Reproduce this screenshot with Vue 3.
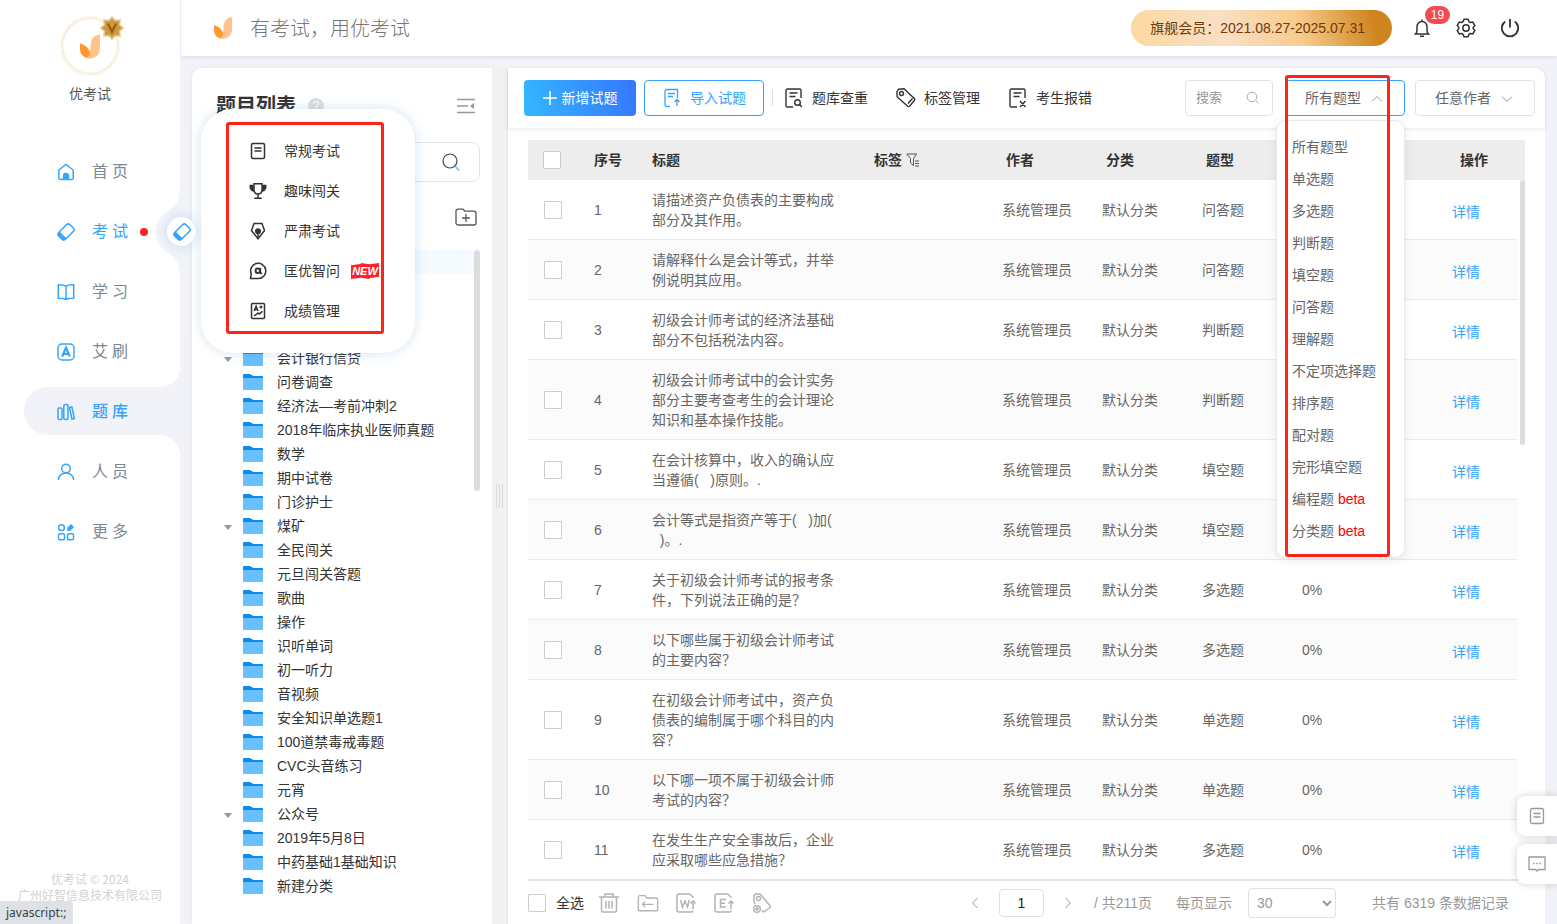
<script setup>
import { ref } from 'vue'

const icons = {
  home: '<path d="M1.800 7 9 1.500 16.200 7v8a1.600 1.600 0 0 1-1.600 1.600H3.400A1.600 1.600 0 0 1 1.800 15z"/><path d="M5.800 16.600V13a3.200 3.200 0 0 1 6.400 0v3.600z" fill="currentColor" stroke="none"/>',
  eraser: '<g transform="rotate(-45 9 9)"><rect x="1" y="4.200" width="16" height="9.600" rx="2.500"/><path d="M4.800 4.200v9.600H3.500A2.500 2.500 0 0 1 1 11.300V6.700a2.500 2.500 0 0 1 2.500-2.500z" fill="currentColor" stroke="none"/></g>',
  book: '<path d="M9 3.200C7.500 2 5 1.700 1.300 1.800v13.400c3.700 0 6.200.1 7.700 1.300 1.500-1.200 4-1.300 7.700-1.300V1.800C13 1.700 10.500 2 9 3.200zM9 3.200v13.300"/>',
  letterA: '<rect x="1" y="1" width="16" height="16" rx="4"/><path d="M5.200 13.500 9 4.600l3.800 8.900M6.600 10.800h4.800" stroke-width="2.200"/>',
  library: '<rect x="1" y="5" width="4" height="11.500" rx="1"/><rect x="6.800" y="1.500" width="4.200" height="15" rx="1.500"/><path d="m12.500 4.500 2.400-.6 2.400 11.500-2.300.8z"/>',
  user: '<circle cx="9" cy="5.500" r="4.300"/><path d="M1.300 17c.6-4.200 3.300-7 7.700-7s7.100 2.800 7.700 7"/>',
  more: '<circle cx="4.500" cy="4.700" r="2.900"/><rect x="1.500" y="10.700" width="6" height="6" rx="1.200"/><rect x="10.500" y="10.700" width="6" height="6" rx="1.200"/><path d="m11.500 6.600 4-4.200" stroke-width="4.400"/><path d="M10 8.200 10.300 5l2.600 2.700z" fill="currentColor" stroke="none"/>',
  doc: '<rect x="2.500" y="1.500" width="13" height="15" rx="1.500"/><path d="M5.500 6h7M5.500 9h7"/>',
  cup: '<path d="M5 1.700h8v6c0 2.700-1.600 4.300-4 4.300S5 10.400 5 7.700zM9 12v4M5.300 16.300h7.400"/><path d="M4.500 3.500H1.300c-.3 3.200 1 5.300 3.800 5.500M13.500 3.500h3.200c.3 3.200-1 5.300-3.800 5.500" fill="currentColor"/>',
  pen: '<path d="M5 1.500h8l2.500 7L9 16.700 2.500 8.500z"/><circle cx="9" cy="9.200" r="3" fill="currentColor" stroke="none"/><path d="M9 9v7"/>',
  ask: '<path d="M1.500 16.500h7.700A7.600 7.600 0 1 0 2.300 12z"/><circle cx="8.800" cy="8.800" r="2.200" stroke-width="2"/><path d="M11.300 6v4.500c0 1 1 1 1.700.3" stroke-width="1.700"/>',
  score: '<rect x="2.500" y="1.500" width="13" height="15" rx="1"/><path d="m5.200 9 1.900-4.700L9 9M5.800 7.500h2.700M10.500 5h3M12 3.500v3M5 14l4-2.800 1.700.6 2.800-2.600"/>',
}

const nav = [
  { label: '首页', icon: 'home' },
  { label: '考试', icon: 'eraser', open: true },
  { label: '学习', icon: 'book' },
  { label: '艾刷', icon: 'letterA' },
  { label: '题库', icon: 'library', active: true },
  { label: '人员', icon: 'user' },
  { label: '更多', icon: 'more' },
]

const examMenu = [
  { label: '常规考试', icon: 'doc' },
  { label: '趣味闯关', icon: 'cup' },
  { label: '严肃考试', icon: 'pen' },
  { label: '匡优智问', icon: 'ask', fresh: true },
  { label: '成绩管理', icon: 'score' },
]

const tree = [
  { name: '会计银行信贷', parent: true },
  { name: '问卷调查' },
  { name: '经济法—考前冲刺2' },
  { name: '2018年临床执业医师真题' },
  { name: '数学' },
  { name: '期中试卷' },
  { name: '门诊护士' },
  { name: '煤矿', parent: true },
  { name: '全民闯关' },
  { name: '元旦闯关答题' },
  { name: '歌曲' },
  { name: '操作' },
  { name: '识听单词' },
  { name: '初一听力' },
  { name: '音视频' },
  { name: '安全知识单选题1' },
  { name: '100道禁毒戒毒题' },
  { name: 'CVC头音练习' },
  { name: '元宵' },
  { name: '公众号', parent: true },
  { name: '2019年5月8日' },
  { name: '中药基础1基础知识' },
  { name: '新建分类' },
]

const rows = [
  { title: '请描述资产负债表的主要构成部分及其作用。', type: '问答题' },
  { title: '请解释什么是会计等式，并举例说明其应用。', type: '问答题' },
  { title: '初级会计师考试的经济法基础部分不包括税法内容。', type: '判断题' },
  { title: '初级会计师考试中的会计实务部分主要考查考生的会计理论知识和基本操作技能。', type: '判断题' },
  { title: '在会计核算中，收入的确认应当遵循(\u00a0\u00a0\u00a0)原则。.', type: '填空题' },
  { title: '会计等式是指资产等于(\u00a0\u00a0\u00a0)加(\n\u00a0\u00a0)。.', type: '填空题' },
  { title: '关于初级会计师考试的报考条件，下列说法正确的是？', type: '多选题', rate: '0%' },
  { title: '以下哪些属于初级会计师考试的主要内容？', type: '多选题', rate: '0%' },
  { title: '在初级会计师考试中，资产负债表的编制属于哪个科目的内容？', type: '单选题', rate: '0%' },
  { title: '以下哪一项不属于初级会计师考试的内容？', type: '单选题', rate: '0%' },
  { title: '在发生生产安全事故后，企业应采取哪些应急措施？', type: '多选题', rate: '0%' },
]

const types = ['所有题型', '单选题', '多选题', '判断题', '填空题', '问答题', '理解题', '不定项选择题', '排序题', '配对题', '完形填空题']
const betaTypes = ['编程题', '分类题']
const page = ref('1')
</script>

<template>
  <div class="app">
    <aside class="sidebar">
      <div class="brand">
        <div class="avatar">
          <svg class="logo" viewBox="0 0 18 22"><path d="M18 0C12 1 9.500 4.500 9.500 11c0 4-2 8-6 9.500C5 21.600 7 22 9 22a9 9 0 0 0 9-9z" fill="#ffc48e" /><path d="M0 8.300c5 1 9 5 9 9.200-.2 2.500-2.500 3.500-4.500 3C1.500 19.500 0 16.500 0 13.500z" fill="#ff9830" /></svg>
          <svg class="vip" viewBox="0 0 24 24"><path d="m12 1 3 3.500 5-.5-.5 5 3.500 3-3.500 3 .5 5-5-.5-3 3.500-3-3.500-5 .5.500-5L1 12l3.500-3L4 4l5 .5z" fill="#cd9844" stroke="#e6c583" stroke-width="1.500" /><path d="m8 7.500 4 8.500 4-8.500" fill="none" stroke="#9a5c10" stroke-width="2.200" /></svg>
        </div>
        <span>优考试</span>
      </div>
      <nav>
        <ul class="nav-list">
          <li v-for="n in nav" :key="n.label" class="nav-item" :class="{ active: n.active, open: n.open }">
            <a href="#">
              <svg class="icon" viewBox="0 0 18 18" v-html="icons[n.icon]"></svg>
              <span>{{ n.label }}</span>
              <i v-if="n.open" class="dot"></i>
            </a>
            <template v-if="n.open">
              <svg class="notch" viewBox="0 0 24 90"><path d="M24 0c0 12-4 19-12 24C4 29 0 37 0 45s4 16 12 21c8 5 12 12 12 24z" fill="#f1f3f8" /></svg>
              <div class="bubble"><svg class="icon" viewBox="0 0 18 18" v-html="icons.eraser"></svg></div>
              <div class="flyout">
                <ul class="flyout-list">
                  <li v-for="m in examMenu" :key="m.label">
                    <a href="#">
                      <svg class="icon" viewBox="0 0 18 18" v-html="icons[m.icon]"></svg>
                      <span>{{ m.label }}</span>
                      <b v-if="m.fresh" class="new-tag">NEW</b>
                    </a>
                  </li>
                </ul>
              </div>
            </template>
          </li>
        </ul>
      </nav>
      <footer class="copyright">优考试 © 2024<br />广州好智信息技术有限公司</footer>
    </aside>

    <div class="main">
      <header class="topbar">
        <svg class="logo" viewBox="0 0 18 22"><path d="M18 0C12 1 9.500 4.500 9.500 11c0 4-2 8-6 9.500C5 21.600 7 22 9 22a9 9 0 0 0 9-9z" fill="#ffc48e" /><path d="M0 8.300c5 1 9 5 9 9.200-.2 2.500-2.500 3.500-4.500 3C1.500 19.500 0 16.500 0 13.500z" fill="#ff9830" /></svg>
        <span class="slogan">有考试，用优考试</span>
        <span class="member">旗舰会员：2021.08.27-2025.07.31</span>
        <button class="icon-btn" aria-label="通知">
          <svg class="icon" viewBox="0 0 20 20"><path d="M3.500 16c1-1 1.500-2.200 1.500-4V8.500a5 5 0 0 1 10 0V12c0 1.800.5 3 1.500 4zM8 18.300h4M10 3.500V1.500" /></svg>
          <span class="count">19</span>
        </button>
        <button class="icon-btn" aria-label="设置">
          <svg class="icon" viewBox="0 0 20 20"><path d="M8 1.300h4l.8 2.300 1.600.9 2.400-.4 2 3.400L17.200 9.400v1.200l1.600 1.900-2 3.400-2.400-.4-1.600.9-.8 2.300H8l-.8-2.300-1.600-.9-2.400.4-2-3.400 1.600-1.900V9.400L1.200 7.500l2-3.400 2.400.4 1.600-.9z" stroke-linejoin="round" /><circle cx="10" cy="10" r="3.200" /></svg>
        </button>
        <button class="icon-btn" aria-label="退出">
          <svg class="icon" viewBox="0 0 20 20"><path d="M5.200 3.500a8.200 8.200 0 1 0 9.600 0M10 1v8.500" stroke-width="1.800" /></svg>
        </button>
      </header>

      <div class="workspace">
        <section class="tree-panel">
          <div class="tree-head">
            <h2>题目列表</h2>
            <span class="help">?</span>
            <button aria-label="收起"><svg viewBox="0 0 20 16"><path d="M1 1.500h18M1 8h11M1 14.500h18" stroke="#999" stroke-width="1.600" fill="none" /><path d="M18 5v6l-4-3z" fill="#999" /></svg></button>
          </div>
          <div class="tree-search">
            <input type="text" aria-label="搜索分类" />
            <svg viewBox="0 0 18 18"><circle cx="8" cy="8" r="7" fill="none" stroke="#444" stroke-width="1.200" /><path d="m13.500 13.500 3.500 4" stroke="#6cc0ff" stroke-width="1.800" /></svg>
          </div>
          <div class="tree-tools">
            <button aria-label="新建文件夹"><svg viewBox="0 0 22 18"><path d="M3 1.200h5l2 2h9a2 2 0 0 1 2 2V15a2 2 0 0 1-2 2H3a2 2 0 0 1-2-2V3.200a2 2 0 0 1 2-2zM7 10h8M11 6v8" fill="none" stroke="#555" stroke-width="1.300" /></svg></button>
          </div>
          <div class="tree-scroll">
            <div class="tree-selected"></div>
            <ul class="tree">
              <li v-for="t in tree" :key="t.name">
                <i class="caret" :class="{ shown: t.parent }"></i>
                <svg class="folder" viewBox="0 0 20 16"><path d="M0 1.200Q0 0 1.200 0H7l3.500 2H19q1 0 1 1v3H0z" fill="#0a8bf0" /><path d="M0 4h20v11q0 1-1 1H1q-1 0-1-1z" fill="#6ac0ff" /></svg>
                <span>{{ t.name }}</span>
              </li>
            </ul>
            <i class="tree-thumb"></i>
          </div>
        </section>

        <div class="splitter"><i></i></div>

        <section class="content">
          <div class="toolbar">
            <button class="btn primary"><svg viewBox="0 0 14 14"><path d="M7 0v14M0 7h14" stroke="#fff" stroke-width="1.500" /></svg>新增试题</button>
            <button class="btn outline"><svg viewBox="0 0 20 20"><path d="M8 18.500H4.500A1.500 1.500 0 0 1 3 17V3a1.500 1.500 0 0 1 1.500-1.500h11V10M3 14.500v2M6 5.500h7M6 8.500h5M15 18v-6.500M12.500 14l2.500-2.500 2.500 2.500" fill="none" stroke="currentColor" stroke-width="1.300" /></svg>导入试题</button>
            <i class="sep"></i>
            <button class="tool"><svg viewBox="0 0 20 20"><path d="M9 19H3.500A1.500 1.500 0 0 1 2 17.500v-15A1.500 1.500 0 0 1 3.500 1h12A1.500 1.500 0 0 1 17 2.500V10M5.500 5h8M5.500 8.500h6" /><circle cx="13.500" cy="14.500" r="2.800" /><path d="m15.500 16.500 2.300 2.500" /></svg>题库查重</button>
            <button class="tool"><svg viewBox="0 0 20 20"><path d="M.8 4 2.500 1.200 8 .8l10.500 9.900a1.500 1.500 0 0 1 0 1.600l-5 6a1.500 1.500 0 0 1-1.800 0L1.200 9zM12 15.500l4.500-5" /><circle cx="5.500" cy="5.500" r="2" /></svg>标签管理</button>
            <button class="tool"><svg viewBox="0 0 20 20"><path d="M9 19H3.500A1.500 1.500 0 0 1 2 17.500v-15A1.500 1.500 0 0 1 3.500 1h12A1.500 1.500 0 0 1 17 2.500V10M5.500 5h8M5.500 8.500h6M12 13l5.500 6M17.500 13 12 19" /></svg>考生报错</button>
            <div class="search">
              <input type="text" placeholder="搜索" aria-label="搜索试题" />
              <svg viewBox="0 0 14 14"><circle cx="6" cy="6" r="4.800" /><path d="m10 10 2.500 2.500" /></svg>
            </div>
            <div class="picker focus">
              <select aria-label="题型"><option>所有题型</option></select>
              <svg viewBox="0 0 12 8"><path d="m1 6.500 5-5 5 5" /></svg>
              <ul class="menu">
                <li v-for="t in types" :key="t"><button>{{ t }}</button></li>
                <li v-for="t in betaTypes" :key="t"><button>{{ t }} <em>beta</em></button></li>
              </ul>
              <i class="marker"></i>
            </div>
            <div class="picker">
              <select aria-label="作者"><option>任意作者</option></select>
              <svg viewBox="0 0 12 8"><path d="m1 1.500 5 5 5-5" /></svg>
            </div>
          </div>

          <div class="table-area">
            <table>
              <colgroup>
                <col class="c-check" /><col class="c-no" /><col class="c-title" /><col class="c-tag" /><col class="c-text" /><col class="c-text" /><col class="c-text" /><col /><col class="c-op" /><col class="c-gutter" />
              </colgroup>
              <thead>
                <tr>
                  <th class="check"><input type="checkbox" aria-label="全选本页" /></th>
                  <th>序号</th>
                  <th>标题</th>
                  <th>标签 <svg class="filter" viewBox="0 0 13 14"><path d="M.7 1h10L7.500 5.500v7L4.500 10V5.500zM9 8h4M9 10.500h4M9 13h4" /></svg></th>
                  <th class="shift">作者</th>
                  <th class="shift">分类</th>
                  <th class="shift">题型</th>
                  <th></th>
                  <th class="op">操作</th>
                  <th class="gutter"></th>
                </tr>
              </thead>
              <tbody>
                <tr v-for="(r, i) in rows" :key="i">
                  <td class="check"><input type="checkbox" :aria-label="'选择 ' + (i + 1)" /></td>
                  <td>{{ i + 1 }}</td>
                  <td class="title">{{ r.title }}</td>
                  <td></td>
                  <td>系统管理员</td>
                  <td>默认分类</td>
                  <td>{{ r.type }}</td>
                  <td>{{ r.rate }}</td>
                  <td class="op"><a href="#">详情</a></td>
                  <td class="gutter"></td>
                </tr>
              </tbody>
            </table>
            <i class="table-thumb"></i>
          </div>

          <div class="pager">
            <label class="all"><input type="checkbox" />全选</label>
            <div class="actions">
              <button aria-label="删除"><svg viewBox="0 0 20 20"><path d="M0 4h20M6 4V1h8v3M2.500 4v13.500A1.500 1.500 0 0 0 4 19h12a1.500 1.500 0 0 0 1.500-1.500V4M7 8v7.500M10 8v7.500M13 8v7.500" /></svg></button>
              <button aria-label="移动"><svg class="wide" viewBox="0 0 24 20"><path d="M3 2h6l2 2.500h10A1.500 1.500 0 0 1 22.500 6v11a1.500 1.500 0 0 1-1.500 1.500H3A1.500 1.500 0 0 1 1.500 17V3.500A1.500 1.500 0 0 1 3 2zM6 11.500h12M9 8.500l-3 3 3 3" /></svg></button>
              <button aria-label="导出 Word"><svg viewBox="0 0 20 20"><path d="M16 5V4l-3.500-3H2a2 2 0 0 0-2 2v14a2 2 0 0 0 2 2h12.500a1.500 1.500 0 0 0 1.500-1.500M3.500 7l2 7L8 8l2.500 6 1.800-7M16 16V8M13.500 10.500 16 8l2.500 2.500" /></svg></button>
              <button aria-label="导出 Excel"><svg viewBox="0 0 20 20"><path d="M16 5V4l-3.500-3H2a2 2 0 0 0-2 2v14a2 2 0 0 0 2 2h12.500a1.500 1.500 0 0 0 1.500-1.500M11 6.500H5.500v7.500H11M5.500 10.200H10M16 16V8M13.500 10.500 16 8l2.500 2.500" /></svg></button>
              <button aria-label="添加标签"><svg viewBox="0 0 20 20"><path d="M2 11.500.8 8 1 2.500 3.300.8l4.200.5L17.200 13a1 1 0 0 1-.2 1.500L10.500 19l-1.500-1.500" /><circle cx="5.500" cy="5.500" r="2" /><circle cx="4" cy="16" r="3.300" /><path d="M2 16h4M4 14v4" /></svg></button>
            </div>
            <button class="arrow" aria-label="上一页"><svg viewBox="0 0 8 12"><path d="M6.500 1 1.500 6l5 5" /></svg></button>
            <input v-model="page" class="page" type="text" aria-label="页码" />
            <button class="arrow" aria-label="下一页"><svg viewBox="0 0 8 12"><path d="m1.500 1 5 5-5 5" /></svg></button>
            <span class="pages">/ 共211页</span>
            <label class="size">每页显示<select><option>30</option></select></label>
            <span class="total">共有 6319 条数据记录</span>
          </div>
        </section>
      </div>
    </div>

    <div class="floating">
      <button aria-label="文档"><svg viewBox="0 0 18 18"><rect x="2.500" y="1.500" width="13" height="15" rx="2" /><path d="M5.500 6.500h7M5.500 10h7" /></svg></button>
      <button aria-label="消息"><svg viewBox="0 0 18 18"><path d="M1 2h16v12.500h-6.500L9 16l-1.500-1.500H1zM5 8.500h1.500M8.300 8.500h1.500M11.500 8.500H13" /></svg></button>
    </div>
    <div class="status">javascript:;</div>
  </div>
</template>

<style>
html,
body {
  margin: 0;
  overflow: hidden;
}
</style>

<style scoped>
* {
  box-sizing: border-box;
}
.app {
  display: flex;
  height: 100vh;
  overflow: hidden;
  position: relative;
  background: #f1f3f8;
  color: #333;
  font: 14px/20px "Liberation Sans", "Noto Sans CJK SC", sans-serif;
}
ul {
  list-style: none;
  margin: 0;
  padding: 0;
}
a {
  color: inherit;
  text-decoration: none;
}
button {
  border: 0;
  padding: 0;
  background: none;
  color: inherit;
  font: inherit;
  cursor: pointer;
}
input,
select {
  font: inherit;
  margin: 0;
  outline: 0;
}
svg {
  display: block;
  flex: none;
}
.icon {
  width: 18px;
  height: 18px;
  fill: none;
  stroke: currentColor;
  stroke-width: 1.5;
}
.logo {
  width: 18px;
  height: 22px;
}
input[type="checkbox"] {
  appearance: none;
  display: block;
  width: 18px;
  height: 18px;
  border: 1px solid #ccc;
  border-radius: 1px;
  background: #fff;
}

/* sidebar */
.sidebar {
  flex: none;
  width: 180px;
  background: #fff;
  display: flex;
  flex-direction: column;
  position: relative;
  z-index: 2;
}
.brand {
  height: 147px;
  padding-top: 16px;
  display: flex;
  flex-direction: column;
  align-items: center;
  gap: 8px;
  color: #555;
}
.avatar {
  width: 60px;
  height: 60px;
  border: 2px solid #fbf4e8;
  border-radius: 50%;
  box-shadow: inset 0 0 0 1px #f3e3c6;
  display: grid;
  place-items: center;
  position: relative;
}
.avatar .logo {
  width: 20px;
  height: 25px;
}
.vip {
  position: absolute;
  right: -6px;
  top: -2px;
  width: 24px;
  height: 24px;
}
.nav-list {
  display: flex;
  flex-direction: column;
  gap: 12px;
}
.nav-item {
  position: relative;
  margin-left: 24px;
  color: #7c8894;
  font-size: 16px;
}
.nav-item > a {
  display: flex;
  align-items: center;
  height: 48px;
  padding-top: 2px;
  padding-left: 33px;
}
.nav-item > a span {
  margin-left: 17px;
  letter-spacing: 4px;
}
.nav-item > a .icon {
  color: #36a6fc;
}
.nav-item.open,
.nav-item.active {
  color: #36a2fc;
}
.nav-item.active {
  background: #f1f3f8;
  border-radius: 24px 0 0 24px;
  font-weight: 500;
}
.nav-item.active::before,
.nav-item.active::after {
  content: "";
  position: absolute;
  right: 0;
  width: 20px;
  height: 20px;
}
.nav-item.active::before {
  top: -20px;
  background: radial-gradient(circle at 0 0, transparent 20px, #f1f3f8 20px);
}
.nav-item.active::after {
  bottom: -20px;
  background: radial-gradient(circle at 0 100%, transparent 20px, #f1f3f8 20px);
}
.dot {
  width: 8px;
  height: 8px;
  margin-left: 8px;
  border-radius: 50%;
  background: #ff1f24;
}
.notch {
  position: absolute;
  right: 0;
  top: -20px;
  width: 24px;
  height: 90px;
}
.bubble {
  position: absolute;
  right: -16px;
  top: 10px;
  width: 29px;
  height: 29px;
  border-radius: 50%;
  background: #fff;
  box-shadow: 0 0 12px rgba(54, 140, 210, 0.25);
  display: grid;
  place-items: center;
}
.flyout {
  position: absolute;
  left: 177px;
  top: -98px;
  width: 214px;
  padding: 13px 25px 19px;
  border-radius: 32px;
  background: #fff;
  box-shadow: 0 0 12px rgba(70, 140, 200, 0.25);
  color: #333;
  font-size: 14px;
}
.flyout-list {
  width: 158px;
  padding: 6px 0 0;
  height: 212px;
  border: 3px solid #ff2418;
  border-radius: 3px;
}
.flyout-list a {
  display: flex;
  align-items: center;
  height: 40px;
  padding-left: 20px;
}
.flyout-list span {
  margin: 0 11px 0 17px;
  white-space: nowrap;
}
.new-tag {
  flex: none;
  width: 28px;
  background: #ff1f2d;
  color: #fff;
  font-size: 11px;
  font-style: italic;
  line-height: 16px;
  text-align: center;
  clip-path: polygon(0 14%, 34% 6%, 36% 0, 66% 8%, 100% 0, 100% 86%, 68% 94%, 64% 100%, 36% 92%, 0 100%);
}
.copyright {
  margin-top: auto;
  padding-bottom: 21px;
  color: #d2d2d2;
  font: 12px/16px "Noto Sans CJK SC", sans-serif;
  text-align: center;
}

/* top bar */
.main {
  flex: 1;
  min-width: 0;
  display: flex;
  flex-direction: column;
}
.topbar {
  flex: none;
  height: 56px;
  padding: 0 37px 0 33px;
  display: flex;
  align-items: center;
  background: #fff;
  border-left: 1px solid #eaecf1;
  box-shadow: 0 1px 5px rgba(0, 0, 0, 0.1);
}
.slogan {
  margin-left: 18px;
  padding-top: 2px;
  font-size: 20px;
  line-height: 28px;
  font-weight: 300;
  color: #777;
}
.member {
  margin-left: auto;
  margin-right: 20px;
  padding: 0 27px 0 19px;
  line-height: 36px;
  border-radius: 18px;
  color: #71390b;
  background: linear-gradient(75deg, #fcd9a0, #f9dfc4 36%, #f8cb8c 64%, #cf851f 92%);
  white-space: nowrap;
}
.icon-btn {
  position: relative;
  width: 20px;
  height: 20px;
}
.icon-btn + .icon-btn {
  margin-left: 24px;
}
.icon-btn .icon {
  width: 20px;
  height: 20px;
}
.count {
  position: absolute;
  left: 13px;
  top: -12px;
  width: 25px;
  border-radius: 9px;
  background: #f44b50;
  color: #fff;
  font-size: 12px;
  line-height: 18px;
  text-align: center;
}

/* workspace */
.workspace {
  flex: 1;
  min-height: 0;
  display: flex;
  padding: 12px 12px 0;
}
.tree-panel {
  flex: none;
  width: 300px;
  background: #fff;
  border-radius: 10px 0 0 0;
  padding: 24px 12px 0 24px;
  box-shadow: 0 0 6px rgba(0, 0, 0, 0.05);
}
.tree-head {
  display: flex;
  align-items: center;
  height: 28px;
}
.tree-head h2 {
  margin: 0;
  font-size: 20px;
  line-height: 28px;
}
.help {
  width: 16px;
  height: 16px;
  margin-left: 12px;
  border-radius: 50%;
  background: #ddd;
  color: #fff;
  font-size: 12px;
  line-height: 16px;
  text-align: center;
}
.tree-head button {
  margin: 0 4px 0 auto;
}
.tree-head button svg {
  width: 20px;
  height: 16px;
}
.tree-search {
  display: flex;
  align-items: center;
  height: 40px;
  margin-top: 22px;
  padding-right: 19px;
  border: 1px solid #e3e3e3;
  border-radius: 8px;
}
.tree-search input {
  flex: 1;
  min-width: 0;
  border: 0;
  background: none;
}
.tree-search svg {
  width: 18px;
  height: 18px;
}
.tree-tools {
  display: flex;
  justify-content: flex-end;
  padding: 26px 3px 0 0;
}
.tree-tools svg {
  width: 22px;
  height: 18px;
}
.tree-scroll {
  position: relative;
  margin-top: 24px;
}
.tree-selected {
  height: 24px;
  margin-right: 6px;
  margin-bottom: 72px;
  background: #f4faff;
}
.tree li {
  display: flex;
  align-items: center;
  height: 24px;
  white-space: nowrap;
}
.caret {
  width: 8px;
  margin: 3px 11px 0 8px;
}
.caret.shown {
  border: 4px solid transparent;
  border-top: 5px solid #999;
  border-bottom: 0;
}
.folder {
  width: 20px;
  height: 16px;
  margin-right: 14px;
}
.tree-thumb {
  position: absolute;
  right: 0;
  top: 0;
  width: 6px;
  height: 241px;
  border-radius: 3px;
  background: #dcdddf;
}
.splitter {
  flex: none;
  width: 16px;
  background: #f1f1f1;
  border-right: 1px solid #e6e6e6;
  display: grid;
  place-items: center;
}
.splitter i {
  width: 7px;
  height: 24px;
  background: repeating-linear-gradient(90deg, #dcdcdc 0 1px, transparent 1px 3px);
}

/* toolbar */
.content {
  flex: 1;
  min-width: 0;
  display: flex;
  flex-direction: column;
  background: #fff;
  border-radius: 0 10px 0 0;
}
.toolbar {
  flex: none;
  position: relative;
  z-index: 1;
  height: 60px;
  padding: 0 10px 0 16px;
  display: flex;
  align-items: center;
  box-shadow: 0 1px 4px rgba(0, 0, 0, 0.1);
  border-radius: 0 10px 0 0;
}
.btn {
  display: flex;
  align-items: center;
  justify-content: center;
  height: 36px;
  border-radius: 4px;
  white-space: nowrap;
}
.primary {
  width: 112px;
  gap: 5px;
  color: #fff;
  background: linear-gradient(75deg, #34b8ff, #3477ff);
}
.primary svg {
  width: 14px;
  height: 14px;
}
.outline {
  width: 120px;
  margin-left: 8px;
  gap: 8px;
  border: 1px solid #36a2fc;
  color: #36a2fc;
}
.outline svg {
  width: 20px;
  height: 20px;
}
.sep {
  width: 1px;
  height: 16px;
  margin: 0 11px 0 8px;
  background: #ddd;
}
.tool {
  display: flex;
  align-items: center;
  gap: 8px;
  margin-right: 28px;
  white-space: nowrap;
}
.tool svg {
  width: 20px;
  height: 20px;
  fill: none;
  stroke: #333;
  stroke-width: 1.4;
}
.search {
  display: flex;
  align-items: center;
  width: 88px;
  height: 36px;
  margin-left: auto;
  padding: 0 12px 0 10px;
  border: 1px solid #e3e3e3;
  border-radius: 4px;
}
.search input {
  flex: 1;
  min-width: 0;
  padding: 0;
  border: 0;
  font-size: 13px;
}
.search input::placeholder {
  color: #999;
}
.search svg {
  width: 14px;
  height: 14px;
  fill: none;
  stroke: #aaa;
}
.picker {
  position: relative;
  display: flex;
  width: 120px;
  height: 36px;
  margin-left: 10px;
}
.picker.focus {
  margin-left: 12px;
}
.picker select {
  width: 100%;
  padding: 0 0 0 19px;
  appearance: none;
  border: 1px solid #e3e3e3;
  border-radius: 4px;
  background: #fff;
  color: #666;
}
.picker.focus select {
  border-color: #36a2fc;
}
.picker > svg {
  position: absolute;
  right: 22px;
  top: 15px;
  width: 12px;
  height: 8px;
  fill: none;
  stroke: #999;
}
.menu {
  position: absolute;
  right: 0;
  top: 40px;
  width: 129px;
  padding: 10px 0;
  border: 1px solid #e8eaee;
  border-radius: 10px;
  background: #fff;
  box-shadow: 0 2px 8px rgba(50, 80, 110, 0.12);
}
.menu button {
  display: block;
  width: 100%;
  padding-left: 15px;
  color: #666;
  line-height: 32px;
  text-align: left;
}
.menu em {
  color: #f00;
  font-style: normal;
}
.marker {
  position: absolute;
  left: 0;
  top: -5px;
  bottom: -441px;
  width: 105px;
  border: 3px solid #ff2418;
  border-radius: 3px;
  pointer-events: none;
}

/* table */
.table-area {
  flex: 1;
  min-height: 0;
  position: relative;
  margin: 12px 20px 0;
}
table {
  width: 100%;
  table-layout: fixed;
  border-collapse: separate;
  border-spacing: 0;
}
.c-check {
  width: 50px;
}
.c-no {
  width: 58px;
}
.c-title {
  width: 222px;
}
.c-tag {
  width: 128px;
}
.c-text {
  width: 100px;
}
.c-op {
  width: 81px;
}
.c-gutter {
  width: 8px;
}
th {
  height: 40px;
  padding: 0 16px;
  background: #ededed;
  text-align: left;
  white-space: nowrap;
}
th.shift {
  padding-left: 20px;
}
th.op {
  padding-left: 24px;
}
.filter {
  display: inline-block;
  width: 13px;
  height: 14px;
  vertical-align: -2px;
  fill: none;
  stroke: #555;
}
td {
  padding: 10px 16px 9px;
  border-bottom: 1px solid #ebebeb;
  color: #666;
  white-space: nowrap;
}
tbody tr:nth-child(even) td {
  background: #fbfbfb;
}
td.title {
  white-space: pre-line;
}
.check {
  padding-left: 15px;
}
td.check {
  padding-left: 16px;
}
td.op {
  padding: 12px 0 7px 16px;
  color: #36a2fc;
}
.gutter {
  padding: 0;
}
tbody tr td.gutter,
tbody tr:nth-child(even) td.gutter {
  padding: 0;
  border: 0;
  background: #fff;
}
.table-thumb {
  position: absolute;
  right: 0;
  top: 40px;
  width: 5px;
  height: 265px;
  border-radius: 3px;
  background: #dcdddf;
}

/* pager */
.pager {
  flex: none;
  display: flex;
  align-items: center;
  height: 45px;
  margin: 0 20px;
  padding: 0 16px 0 0;
  border-top: 2px solid #e6e6e6;
  background: #fff;
  position: relative;
  color: #999;
  white-space: nowrap;
}
.all {
  display: flex;
  align-items: center;
  gap: 10px;
  color: #333;
}
.actions {
  display: flex;
  align-items: center;
  gap: 18px;
  margin-left: 15px;
}
.actions svg {
  width: 20px;
  height: 20px;
  fill: none;
  stroke: #b3b3b3;
  stroke-width: 1.5;
  overflow: visible;
}
.actions svg.wide {
  width: 22px;
}
.arrow {
  margin-left: 20px;
}
.actions + .arrow {
  margin: 0 20px 0 auto;
}
.arrow svg {
  width: 8px;
  height: 12px;
  fill: none;
  stroke: #999;
}
.page {
  width: 45px;
  height: 28px;
  padding: 0;
  border: 1px solid #e0e0e0;
  border-radius: 4px;
  color: #222;
  text-align: center;
}
.pages {
  margin: 0 24px 0 22px;
}
.size {
  display: flex;
  align-items: center;
  gap: 16px;
}
.size select {
  width: 88px;
  height: 30px;
  padding: 0 4px;
  border: 1px solid #e0e0e0;
  border-radius: 4px;
  background: #fff;
  color: #999;
}
.total {
  margin-left: 36px;
}

/* overlays */
.floating {
  position: absolute;
  right: 0;
  bottom: 40px;
  z-index: 3;
  display: flex;
  flex-direction: column;
  gap: 8px;
}
.floating button {
  display: grid;
  place-items: center;
  width: 40px;
  height: 40px;
  border-radius: 8px 0 0 8px;
  background: #fff;
  box-shadow: 0 0 8px rgba(0, 0, 0, 0.18);
}
.floating svg {
  width: 18px;
  height: 18px;
  fill: none;
  stroke: #999;
  stroke-width: 1.3;
}
.status {
  position: absolute;
  left: 0;
  bottom: 0;
  z-index: 3;
  padding: 0 7px 0 6px;
  border-radius: 0 4px 0 0;
  background: #dee2e7;
  color: #3c4043;
  font: 12px/23px "Noto Sans", sans-serif;
}
</style>
